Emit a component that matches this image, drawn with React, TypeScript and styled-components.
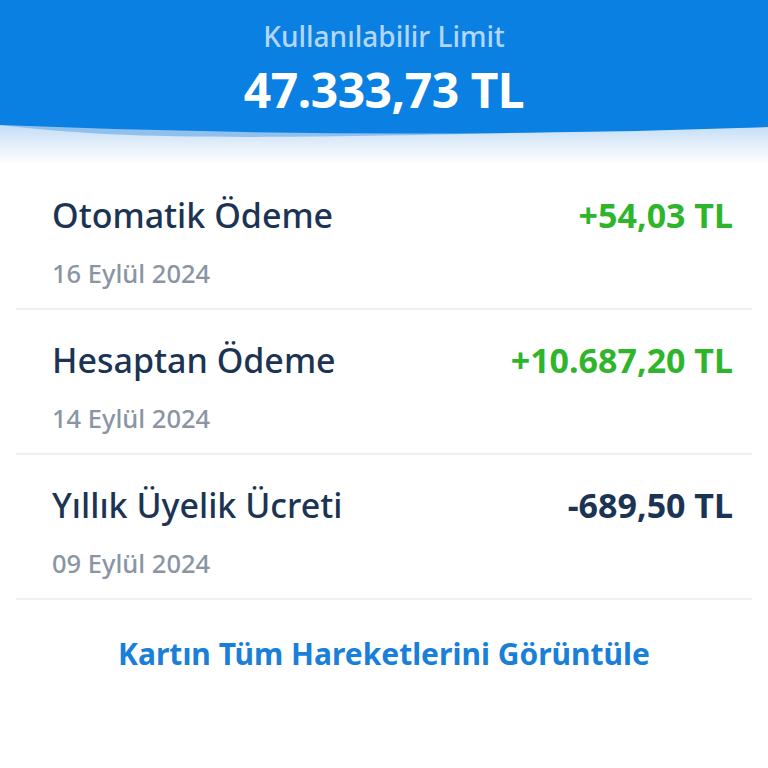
import React from 'react';
import styled, { createGlobalStyle } from 'styled-components';

const GlobalStyle = createGlobalStyle`
  html, body {
    margin: 0;
    padding: 0;
    background: #ffffff;
  }
  body {
    font-family: "Noto Sans", "Open Sans", sans-serif;
  }
`;

const Page = styled.div`
  width: 768px;
  min-height: 768px;
  background: #ffffff;
`;

const Header = styled.header`
  height: 125px;
  box-sizing: border-box;
  padding-top: 19px;
  background: #0b80e3;
  display: flex;
  flex-direction: column;
  align-items: center;
`;

const LimitLabel = styled.div`
  font-size: 28px;
  line-height: 34px;
  font-weight: 500;
  color: #b3d7fa;
`;

const LimitValue = styled.div`
  margin-top: 8px;
  font-size: 48px;
  line-height: 58px;
  font-weight: 700;
  color: #ffffff;
  letter-spacing: -0.5px;
`;

const Wave = styled.div`
  height: 40px;
  background: linear-gradient(180deg, #c3ddf6 0%, #e4effa 50%, #ffffff 100%);

  svg {
    display: block;
    width: 100%;
    height: 100%;
  }
`;

const List = styled.div`
  padding: 0 16px;
`;

const Row = styled.div`
  display: grid;
  grid-template-columns: 1fr auto;
  align-items: center;
  row-gap: 19px;
  padding: 28px 19px 18px 36px;
  border-bottom: 2px solid #eef0f3;
`;

const Title = styled.div`
  font-size: 34px;
  line-height: 44px;
  font-weight: 500;
  color: #1b3453;
`;

const Amount = styled.div<{ $positive: boolean }>`
  font-size: 34px;
  line-height: 44px;
  font-weight: 700;
  text-align: right;
  color: ${(p) => (p.$positive ? '#2fb52c' : '#1b3453')};
`;

const DateText = styled.div`
  grid-column: 1 / -1;
  font-size: 25.5px;
  line-height: 34px;
  font-weight: 500;
  color: #8a95a3;
`;

const AllLink = styled.a`
  display: block;
  margin-top: 34px;
  text-align: center;
  font-size: 30px;
  line-height: 40px;
  font-weight: 700;
  color: #1a7fd9;
  text-decoration: none;
`;

const transactions = [
  { title: 'Otomatik Ödeme', date: '16 Eylül 2024', amount: '+54,03 TL', positive: true },
  { title: 'Hesaptan Ödeme', date: '14 Eylül 2024', amount: '+10.687,20 TL', positive: true },
  { title: 'Yıllık Üyelik Ücreti', date: '09 Eylül 2024', amount: '-689,50 TL', positive: false },
];

export default function App() {
  return (
    <Page>
      <GlobalStyle />
      <Header>
        <LimitLabel>Kullanılabilir Limit</LimitLabel>
        <LimitValue>47.333,73 TL</LimitValue>
      </Header>
      <Wave>
        <svg viewBox="0 0 768 40" preserveAspectRatio="none">
          <path d="M0 0 C 150 18, 300 13, 768 2 L768 0 Z" fill="#8fc0ee" />
          <path d="M0 0 Q 384 16, 768 2 L768 0 Z" fill="#0b80e3" />
        </svg>
      </Wave>
      <List>
        {transactions.map((t) => (
          <Row key={t.title}>
            <Title>{t.title}</Title>
            <Amount $positive={t.positive}>{t.amount}</Amount>
            <DateText>{t.date}</DateText>
          </Row>
        ))}
      </List>
      <AllLink href="#">Kartın Tüm Hareketlerini Görüntüle</AllLink>
    </Page>
  );
}
